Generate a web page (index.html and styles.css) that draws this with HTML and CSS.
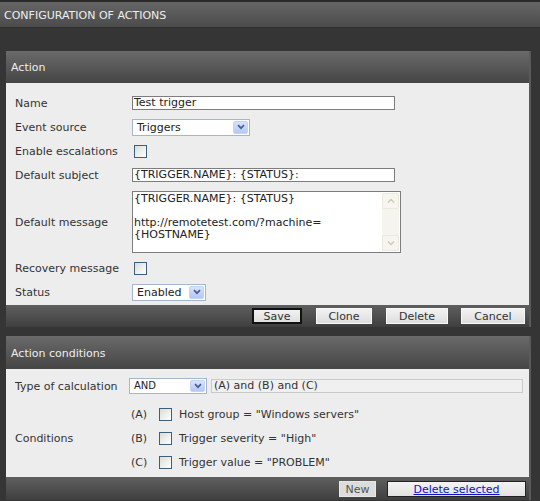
FILE: index.html
```html
<!DOCTYPE html>
<html>
<head>
<meta charset="utf-8">
<link rel="stylesheet" href="styles.css">
</head>
<body>
<div class="page">
  <div class="titlebar">CONFIGURATION OF ACTIONS</div>
  <div class="content">
    <div class="panel">
      <div class="panel-head">Action</div>
      <div class="panel-body body-action">
        <div class="row"><div class="label">Name</div><div class="value"><div class="input w-wide">Test trigger</div></div></div>
        <div class="row"><div class="label">Event source</div><div class="value">
          <div class="select w-trig"><span class="select-value">Triggers</span><span class="select-btn"><svg width="8" height="6" viewBox="0 0 8 6"><path d="M1 1.2 L4 4.2 L7 1.2" fill="none" stroke="#4a5f8c" stroke-width="1.7"/></svg></span></div>
        </div></div>
        <div class="row"><div class="label">Enable escalations</div><div class="value"><span class="checkbox"></span></div></div>
        <div class="row"><div class="label">Default subject</div><div class="value"><div class="input w-wide">{TRIGGER.NAME}: {STATUS}:</div></div></div>
        <div class="row row-tall"><div class="label">Default message</div><div class="value">
          <div class="textarea">
            <div class="textarea-text">{TRIGGER.NAME}: {STATUS}<br><br>http://remotetest.com/?machine=<br>{HOSTNAME}</div>
            <div class="scrollbar">
              <span class="sb-btn"><svg width="8" height="6" viewBox="0 0 8 6"><path d="M1 4.5 L4 1.5 L7 4.5" fill="none" stroke="#cfcbbb" stroke-width="1.5"/></svg></span>
              <span class="sb-btn"><svg width="8" height="6" viewBox="0 0 8 6"><path d="M1 1.5 L4 4.5 L7 1.5" fill="none" stroke="#cfcbbb" stroke-width="1.5"/></svg></span>
            </div>
          </div>
        </div></div>
        <div class="row"><div class="label">Recovery message</div><div class="value"><span class="checkbox"></span></div></div>
        <div class="row"><div class="label">Status</div><div class="value">
          <div class="select w-status"><span class="select-value">Enabled</span><span class="select-btn"><svg width="8" height="6" viewBox="0 0 8 6"><path d="M1 1.2 L4 4.2 L7 1.2" fill="none" stroke="#4a5f8c" stroke-width="1.7"/></svg></span></div>
        </div></div>
      </div>
      <div class="panel-foot foot-action">
        <span class="btn btn-focus b-save">Save</span>
        <span class="btn b-clone">Clone</span>
        <span class="btn b-delete">Delete</span>
        <span class="btn b-cancel">Cancel</span>
      </div>
    </div>

    <div class="panel panel-second">
      <div class="panel-head head-second">Action conditions</div>
      <div class="panel-body body-cond">
        <div class="row row-cond"><div class="label">Type of calculation</div><div class="value calc">
          <div class="select w-and"><span class="select-value small">AND</span><span class="select-btn"><svg width="8" height="6" viewBox="0 0 8 6"><path d="M1 1.2 L4 4.2 L7 1.2" fill="none" stroke="#4a5f8c" stroke-width="1.7"/></svg></span></div>
          <div class="formula">(A) and (B) and (C)</div>
        </div></div>
        <div class="row row-cond cond-group"><div class="label">Conditions</div><div class="value cond-list">
          <div class="cond"><span class="tag">(A)</span><span class="checkbox"></span><span>Host group = "Windows servers"</span></div>
          <div class="cond"><span class="tag">(B)</span><span class="checkbox"></span><span>Trigger severity = "High"</span></div>
          <div class="cond"><span class="tag">(C)</span><span class="checkbox"></span><span>Trigger value = "PROBLEM"</span></div>
        </div></div>
      </div>
      <div class="panel-foot foot-cond">
        <span class="btn btn-new">New</span>
        <span class="btn btn-del"><a href="#" class="link">Delete selected</a></span>
      </div>
    </div>
  </div>
</div>
</body>
</html>
```
FILE: styles.css
```css
* { box-sizing: border-box; }
html, body { height: 100%; }
body {
  margin: 0;
  background: #353535;
  font-family: "DejaVu Sans", Verdana, sans-serif;
  font-size: 11px;
  color: #333;
  overflow: hidden;
}
.page { border-top: 2px solid #2a2a2a; }
.titlebar {
  height: 26px;
  line-height: 27px;
  padding-left: 4px;
  color: #eeeeee;
  background: linear-gradient(#666666, #4b4b4b);
  border-bottom: 1px solid #2f2f2f;
}
.content { padding: 23px 9px 0 6px; }
.panel { border-right: 2px solid #5a5a5a; }
.panel-second { margin-top: 9px; }
.panel-head {
  height: 32px;
  line-height: 34px;
  padding-left: 5px;
  color: #eeeeee;
  background: linear-gradient(#6a6a6a, #454545);
}
.head-second { height: 33px; line-height: 35px; }
.panel-body { background: #ededed; padding-left: 9px; }
.body-action { padding-top: 8px; padding-bottom: 1px; }
.body-cond { padding-top: 5px; padding-bottom: 3px; }
.row {
  display: grid;
  grid-template-columns: 117px 1fr;
  align-items: center;
  height: 24px;
}
.row-tall { height: 69px; }
.row-cond { grid-template-columns: 114px 1fr; }
.cond-group { height: auto; margin-top: 4px; }
.label { color: #333; white-space: nowrap; padding-top: 1px; }
.value { display: flex; align-items: center; }

.input {
  height: 14px;
  line-height: 12px;
  border: 1px solid #7d7d7d;
  background: #fff;
  padding-left: 1px;
  color: #222;
  white-space: nowrap;
  overflow: hidden;
}
.w-wide { width: 263px; }

.select {
  display: flex;
  height: 17px;
  border: 1px solid #a7b5c8;
  background: #fff;
}
.w-trig { width: 118px; }
.w-status { width: 74px; }
.w-and { width: 78px; height: 16px; }
.select-value { flex: 1; padding-left: 4px; line-height: 15px; color: #222; }
.w-and .select-value { line-height: 14px; }
.select-value.small { font-size: 10px; }
.select-btn {
  width: 15px;
  margin: 1px;
  display: flex;
  align-items: center;
  justify-content: center;
  background: linear-gradient(#d6e3fd, #b4c8f5);
  border: 1px solid #c3d3f8;
  border-radius: 2px;
}

.checkbox {
  display: inline-block;
  width: 13px;
  height: 13px;
  margin-left: 2px;
  border: 1px solid #3d5f7f;
  background: linear-gradient(135deg, #dcdcd5, #ffffff);
}

.textarea {
  width: 269px;
  height: 62px;
  border: 1px solid #7d7d7d;
  background: #fff;
  display: flex;
}
.textarea-text {
  flex: 1;
  padding: 1px 1px;
  line-height: 12px;
  color: #222;
  white-space: nowrap;
}
.scrollbar {
  width: 17px;
  margin: 1px 1px 1px 0;
  background: #f5f4ee;
  display: flex;
  flex-direction: column;
  justify-content: space-between;
}
.sb-btn {
  height: 16px;
  display: flex;
  align-items: center;
  justify-content: center;
  background: #f6f5ef;
  border: 1px solid #eceadf;
  border-radius: 2px;
}

.panel-foot {
  display: flex;
  justify-content: flex-end;
  align-items: center;
  background: linear-gradient(#5f5f5f, #3f3f3f);
}
.foot-action { height: 22px; gap: 14px; padding-right: 4px; }
.foot-cond { height: 23px; gap: 11px; padding-right: 3px; padding-top: 1px; }
.btn {
  display: inline-flex;
  align-items: center;
  justify-content: center;
  height: 16px;
  padding: 0;
  color: #333;
  background: linear-gradient(#f2f2f2, #dedede);
  border: 1px solid #f8f8f8;
  white-space: nowrap;
}
.b-save { width: 50px; }
.b-clone { width: 56px; }
.b-delete { width: 62px; }
.b-cancel { width: 64px; margin-left: -1px; }
.btn-focus { border: 2px solid #111; }
.btn-new { width: 37px; color: #555; background: #dcdcdc; border-color: #e8e8e8; }
.btn-del { width: 139px; border: 1px solid #222; background: linear-gradient(#f4f4f4, #e2e2e2); }
.link { color: #1010c8; text-decoration: underline; }

.calc { gap: 4px; }
.formula {
  width: 312px;
  height: 14px;
  line-height: 12px;
  border: 1px solid #cacaca;
  background: #f0f0f0;
  padding-left: 2px;
  color: #333;
}
.cond-list { flex-direction: column; align-items: stretch; }
.cond { display: flex; align-items: center; height: 24px; padding-top: 1px; }
.tag { width: 30px; padding-left: 2px; }
.cond .checkbox { margin-left: 0; margin-right: 7px; }
```
